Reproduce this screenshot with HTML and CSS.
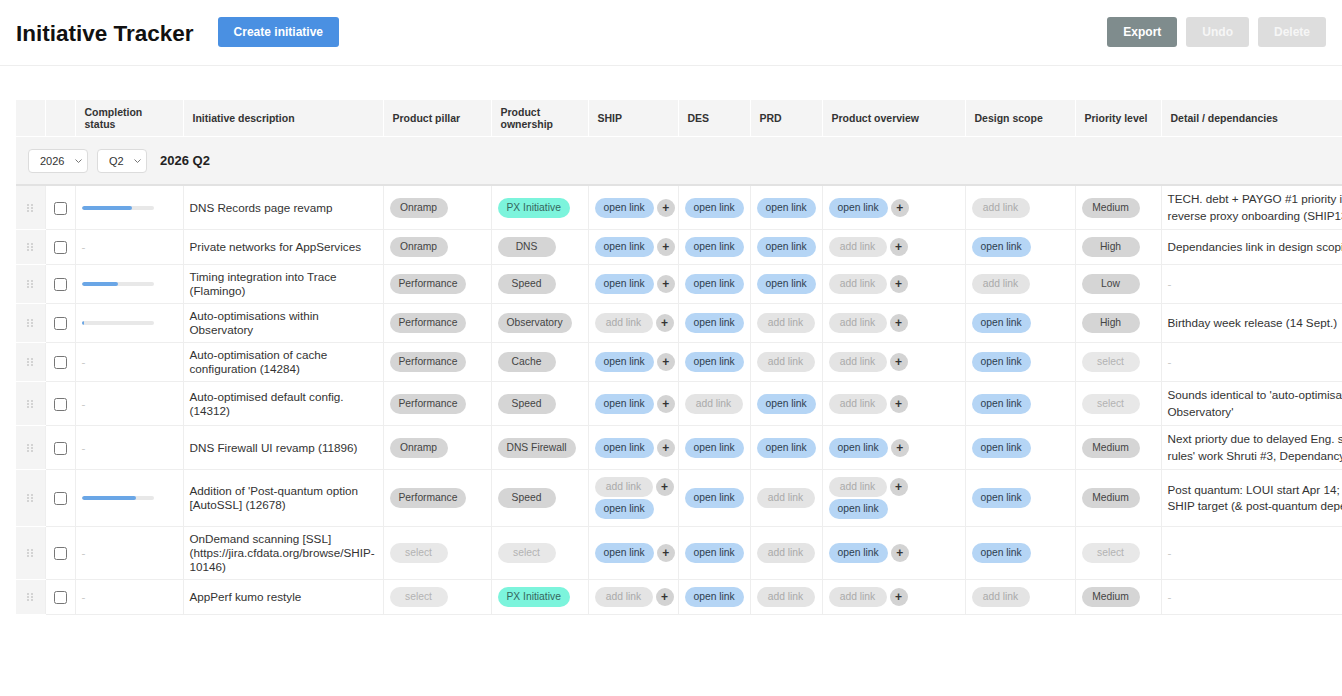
FILE: index.html
```html
<!DOCTYPE html>
<html>
<head>
    <title>Initiative Tracker</title>
    <link rel="stylesheet" href="styles.css">
</head>
<body>

    <header class="topbar">
        <div class="topbar-left">
            <h1>Initiative Tracker</h1>
            <button class="btn btn-primary">Create initiative</button>
        </div>
        <div class="topbar-right">
            <button class="btn btn-dark">Export</button>
            <button class="btn btn-disabled" disabled>Undo</button>
            <button class="btn btn-disabled" disabled>Delete</button>
        </div>
    </header>

    <div class="table-wrap">
        <table class="tracker">
            <colgroup>
                <col class="col-drag">
                <col class="col-check">
                <col class="col-status">
                <col class="col-desc">
                <col class="col-pillar">
                <col class="col-owner">
                <col class="col-ship">
                <col class="col-des">
                <col class="col-prd">
                <col class="col-overview">
                <col class="col-design">
                <col class="col-priority">
                <col class="col-detail">
            </colgroup>
            <thead>
                <tr>
                    <th></th>
                    <th></th>
                    <th>Completion status</th>
                    <th>Initiative description</th>
                    <th>Product pillar</th>
                    <th>Product ownership</th>
                    <th>SHIP</th>
                    <th>DES</th>
                    <th>PRD</th>
                    <th>Product overview</th>
                    <th>Design scope</th>
                    <th>Priority level</th>
                    <th>Detail / dependancies</th>
                </tr>
            </thead>
            <tbody id="rows">
                <tr class="group-row">
                    <td colspan="13">
                        <div class="group-bar">
                            <div class="select-box">
                                <select>
                                    <option>2025</option>
                                    <option selected>2026</option>
                                    <option>2027</option>
                                </select>
                                <svg width="7" height="4" viewBox="0 0 7 4"><path d="M0.5 0.5 L3.5 3.5 L6.5 0.5" fill="none" stroke="#777" stroke-width="1"/></svg>
                            </div>
                            <div class="select-box">
                                <select>
                                    <option>Q1</option>
                                    <option selected>Q2</option>
                                    <option>Q3</option>
                                    <option>Q4</option>
                                </select>
                                <svg width="7" height="4" viewBox="0 0 7 4"><path d="M0.5 0.5 L3.5 3.5 L6.5 0.5" fill="none" stroke="#777" stroke-width="1"/></svg>
                            </div>
                            <span class="group-label">2026 Q2</span>
                        </div>
                    </td>
                </tr>
            </tbody>
        </table>
    </div>

    <script>
        const initiatives = [
            { progress: 70, name: "DNS Records page revamp", pillar: "Onramp", owner: "PX Initiative",
              ship: ["open"], des: "open", prd: "open", overview: ["open"], design: "add", priority: "Medium",
              detail: "TECH. debt + PAYGO #1 priority is Load Balancing reverse proxy onboarding (SHIP13570)" },
            { progress: null, name: "Private networks for AppServices", pillar: "Onramp", owner: "DNS",
              ship: ["open"], des: "open", prd: "open", overview: ["add"], design: "open", priority: "High",
              detail: "Dependancies link in design scoping doc" },
            { progress: 50, name: "Timing integration into Trace (Flamingo)", pillar: "Performance", owner: "Speed",
              ship: ["open"], des: "open", prd: "open", overview: ["add"], design: "add", priority: "Low",
              detail: "" },
            { progress: 4, name: "Auto-optimisations within Observatory", pillar: "Performance", owner: "Observatory",
              ship: ["add"], des: "open", prd: "add", overview: ["add"], design: "open", priority: "High",
              detail: "Birthday week release (14 Sept.)" },
            { progress: null, name: "Auto-optimisation of cache configuration (14284)", pillar: "Performance", owner: "Cache",
              ship: ["open"], des: "open", prd: "add", overview: ["add"], design: "open", priority: "",
              detail: "" },
            { progress: null, name: "Auto-optimised default config. (14312)", pillar: "Performance", owner: "Speed",
              ship: ["open"], des: "add", prd: "open", overview: ["add"], design: "open", priority: "",
              detail: "Sounds identical to 'auto-optimisations within Observatory'" },
            { progress: null, name: "DNS Firewall UI revamp (11896)", pillar: "Onramp", owner: "DNS Firewall",
              ship: ["open"], des: "open", prd: "open", overview: ["open"], design: "open", priority: "Medium",
              detail: "Next priorty due to delayed Eng. support for 'Firewall rules' work Shruti #3, Dependancy on WAF team" },
            { progress: 75, name: "Addition of 'Post-quantum option [AutoSSL] (12678)", pillar: "Performance", owner: "Speed",
              ship: ["add", "open"], des: "open", prd: "add", overview: ["add", "open"], design: "open", priority: "Medium",
              detail: "Post quantum: LOUI start Apr 14; Jun 30 release for SHIP target (&amp; post-quantum dependancies)" },
            { progress: null, name: "OnDemand scanning [SSL] (https://jira.cfdata.org/browse/SHIP-10146)", pillar: "", owner: "",
              ship: ["open"], des: "open", prd: "add", overview: ["open"], design: "open", priority: "",
              detail: "" },
            { progress: null, name: "AppPerf kumo restyle", pillar: "", owner: "PX Initiative",
              ship: ["add"], des: "open", prd: "add", overview: ["add"], design: "add", priority: "Medium",
              detail: "" }
        ];

        const dragIcon = '<svg width="6" height="8" viewBox="0 0 6 8" fill="#a8a8a8">' +
            '<circle cx="1" cy="1" r="0.8"/><circle cx="5" cy="1" r="0.8"/>' +
            '<circle cx="1" cy="4" r="0.8"/><circle cx="5" cy="4" r="0.8"/>' +
            '<circle cx="1" cy="7" r="0.8"/><circle cx="5" cy="7" r="0.8"/></svg>';

        function pill(label, kind) {
            return `<span class="pill ${kind}">${label}</span>`;
        }

        function tag(value) {
            if (!value) return pill('select', 'pill-empty');
            if (value === 'PX Initiative') return pill(value, 'pill-teal');
            return pill(value, 'pill-grey');
        }

        function link(state) {
            return state === 'open' ? pill('open link', 'pill-blue') : pill('add link', 'pill-add');
        }

        function linkList(states, canAdd) {
            const items = states.map((state, i) => {
                const plus = (i === 0 && canAdd) ? '<button class="add-btn">+</button>' : '';
                return `<div class="link-row">${link(state)}${plus}</div>`;
            });
            return `<div class="links">${items.join('')}</div>`;
        }

        function progressBar(value) {
            if (value === null) return '<span class="empty">-</span>';
            return `<div class="progress"><div class="progress-fill" style="width: ${value}%"></div></div>`;
        }

        const tbody = document.getElementById('rows');

        initiatives.forEach(item => {
            const tr = document.createElement('tr');
            tr.innerHTML = `
                <td class="drag">${dragIcon}</td>
                <td class="check"><input type="checkbox"></td>
                <td>${progressBar(item.progress)}</td>
                <td class="desc">${item.name}</td>
                <td>${tag(item.pillar)}</td>
                <td>${tag(item.owner)}</td>
                <td>${linkList(item.ship, true)}</td>
                <td>${linkList([item.des], false)}</td>
                <td>${linkList([item.prd], false)}</td>
                <td>${linkList(item.overview, true)}</td>
                <td>${linkList([item.design], false)}</td>
                <td>${item.priority ? pill(item.priority, 'pill-grey') : pill('select', 'pill-empty')}</td>
                <td class="detail">${item.detail || '<span class="empty">-</span>'}</td>
            `;
            tbody.appendChild(tr);
        });
    </script>
</body>
</html>
```

FILE: styles.css
```css
body {
    margin: 0;
    font-family: "Liberation Sans", Arial, sans-serif;
    color: #333;
    background-color: #fff;
    overflow-x: hidden;
}

.topbar {
    display: flex;
    justify-content: space-between;
    align-items: center;
    padding: 17px 16px 18px;
    border-bottom: 1px solid #eee;
}

.topbar-left {
    display: flex;
    align-items: center;
    gap: 24px;
}

.topbar h1 {
    margin: 3px 0 0;
    font-size: 22.5px;
    font-weight: bold;
    color: #111;
}

.topbar-right {
    display: flex;
    gap: 9px;
}

.btn {
    height: 30px;
    padding: 0 16px;
    border: none;
    border-radius: 3px;
    font-family: inherit;
    font-size: 12px;
    font-weight: bold;
    color: #fff;
    cursor: pointer;
}

.btn-primary {
    background-color: #4a90e2;
}

.btn-dark {
    background-color: #7f8c8d;
}

.btn-disabled {
    background-color: #dddddd;
    color: #f6f6f6;
    cursor: default;
}

.table-wrap {
    padding: 34px 16px 0;
}

.tracker {
    border-collapse: collapse;
    table-layout: fixed;
    width: 1445px;
}

.col-drag { width: 29px; }
.col-check { width: 30px; }
.col-status { width: 108px; }
.col-desc { width: 200px; }
.col-pillar { width: 108px; }
.col-owner { width: 97px; }
.col-ship { width: 90px; }
.col-des { width: 72px; }
.col-prd { width: 72px; }
.col-overview { width: 143px; }
.col-design { width: 110px; }
.col-priority { width: 86px; }
.col-detail { width: 300px; }

.tracker th {
    background-color: #f4f4f4;
    border-right: 1px solid #fff;
    padding: 6px 9px;
    font-size: 10.5px;
    line-height: 12px;
    font-weight: bold;
    color: #333;
    text-align: left;
    vertical-align: middle;
}

.tracker td {
    padding: 5px 6px;
    border-bottom: 1px solid #eee;
    border-right: 1px solid #eee;
    vertical-align: middle;
    font-size: 11.7px;
    line-height: 14px;
}

.tracker .group-row td {
    background-color: #f4f4f4;
    border-top: 1px solid #fff;
    border-bottom: 2px solid #e2e2e2;
    border-right: none;
    padding: 0;
}

.group-bar {
    display: flex;
    align-items: center;
    gap: 9px;
    padding: 12px 12px 11px;
}

.select-box {
    position: relative;
    display: inline-flex;
}

.select-box select {
    appearance: none;
    height: 24px;
    border: 1px solid #dcdcdc;
    border-radius: 4px;
    background-color: #fff;
    font-family: inherit;
    font-size: 11px;
    color: #333;
    padding: 0 22px 0 11px;
}

.select-box svg {
    position: absolute;
    right: 6px;
    top: 10px;
    pointer-events: none;
}

.group-label {
    margin-left: 4px;
    font-size: 13px;
    font-weight: bold;
    color: #222;
}

.tracker td.drag {
    background-color: #f4f4f4;
    border-bottom-color: #fff;
    text-align: center;
}

.drag svg {
    display: block;
    margin: 0 auto;
}

.tracker td.check {
    text-align: center;
}

.check input {
    margin: 0;
    width: 13px;
    height: 13px;
    vertical-align: middle;
}

.tracker td.detail {
    line-height: 16.5px;
}

.empty {
    color: #c8c8c8;
}

.progress {
    width: 72px;
    height: 4px;
    background-color: #e8e8e8;
    border-radius: 2px;
    overflow: hidden;
}

.progress-fill {
    height: 100%;
    background-color: #6aa6e6;
    border-radius: 2px;
}

.pill {
    display: inline-flex;
    align-items: center;
    justify-content: center;
    box-sizing: border-box;
    height: 20px;
    min-width: 58px;
    padding: 0 9px;
    border-radius: 10px;
    font-size: 10.3px;
    white-space: nowrap;
    vertical-align: middle;
}

.pill-grey {
    background-color: #d5d5d5;
    color: #444;
}

.pill-teal {
    background-color: #7cf4dc;
    color: #35665d;
}

.pill-blue {
    background-color: #b5d5f5;
    color: #2d3e50;
}

.pill-add {
    background-color: #e4e4e4;
    color: #aaa;
}

.pill-empty {
    background-color: #e8e8e8;
    color: #b3b3b3;
}

.links {
    display: flex;
    flex-direction: column;
    align-items: flex-start;
    gap: 2px;
    padding: 2px 0;
}

.link-row {
    display: flex;
    align-items: center;
    gap: 3px;
}

.add-btn {
    display: inline-flex;
    align-items: center;
    justify-content: center;
    width: 18px;
    height: 18px;
    padding: 0;
    border: none;
    border-radius: 50%;
    background-color: #d3d3d3;
    font-family: inherit;
    font-size: 12px;
    font-weight: bold;
    color: #333;
    cursor: pointer;
}
```
